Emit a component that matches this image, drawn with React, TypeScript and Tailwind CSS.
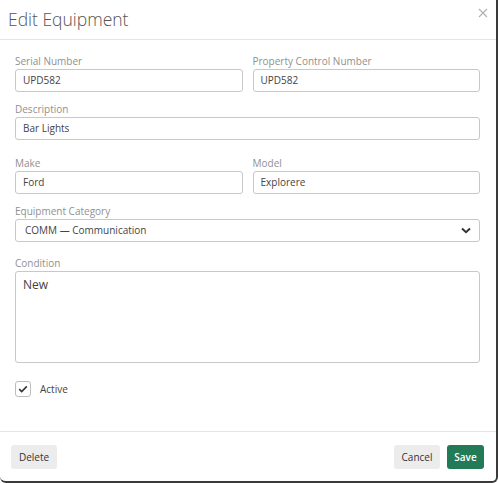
import React from "react";

const font = { fontFamily: "'Open Sans', 'Noto Sans', Arial, sans-serif" };

function Field({ label, value, className = "" }: { label: string; value: string; className?: string }) {
  return (
    <div className={`flex flex-col ${className}`}>
      <label className="h-4 text-[10px] leading-4 text-[#909090]">{label}</label>
      <div className="flex h-[23px] items-center rounded-[3px] border border-[#c8c8c8] px-[7px] text-[10px] text-[#444]">
        {value}
      </div>
    </div>
  );
}

export default function App() {
  return (
    <div className="h-[483px] w-[498px] bg-white" style={font}>
      <div className="flex h-[483px] w-[498px] flex-col rounded-b-[6px] border-r-2 border-b-2 border-[#3a3a3a] bg-white">
        <div className="relative flex h-10 shrink-0 items-center border-b border-[#e5e5e5] pl-2">
          <h1 className="text-[17.5px] font-light leading-none text-[#555]">Edit Equipment</h1>
          <button className="absolute right-[8px] top-[8px] flex h-[10px] w-[10px] items-center justify-center">
            <svg width="10" height="10" viewBox="0 0 10 10" fill="none" stroke="#b0b0b0" strokeWidth="1.1">
              <path d="M1 1L9 9M9 1L1 9" />
            </svg>
          </button>
        </div>

        <div className="flex flex-1 flex-col pl-[15px] pr-4 pt-[13px]">
          <div className="grid grid-cols-2 gap-x-[10px]">
            <Field label="Serial Number" value="UPD582" />
            <Field label="Property Control Number" value="UPD582" />
          </div>
          <Field label="Description" value="Bar Lights" className="mt-[9px]" />
          <div className="mt-[15px] grid grid-cols-2 gap-x-[10px]">
            <Field label="Make" value="Ford" />
            <Field label="Model" value="Explorere" />
          </div>
          <div className="mt-[9px] flex flex-col">
            <label className="h-4 text-[10px] leading-4 text-[#909090]">Equipment Category</label>
            <div className="flex h-[23px] items-center justify-between rounded-[3px] border border-[#c8c8c8] pl-[9px] pr-[8px] text-[10px] text-[#444]">
              <span>COMM — Communication</span>
              <svg width="10" height="7" viewBox="0 0 10 7" fill="none" stroke="#333" strokeWidth="2">
                <path d="M1 1.5L5 5.2L9 1.5" />
              </svg>
            </div>
          </div>
          <div className="mt-[13px] flex flex-col">
            <label className="h-4 text-[10px] leading-4 text-[#909090]">Condition</label>
            <div className="h-[92px] rounded-[3px] border border-[#c8c8c8] px-[7px] pt-[4px] text-[12px] text-[#444]">
              New
            </div>
          </div>
          <div className="mt-[18px] flex items-center gap-[9px]">
            <div className="flex h-4 w-4 items-center justify-center rounded-[3px] border border-[#bdbdbd]">
              <svg width="10" height="8" viewBox="0 0 10 8" fill="none" stroke="#333" strokeWidth="1.6">
                <path d="M1.2 4.2L3.7 6.6L8.8 1.4" />
              </svg>
            </div>
            <span className="text-[10px] text-[#444]">Active</span>
          </div>
        </div>

        <div className="flex shrink-0 items-center justify-between border-t border-[#e5e5e5] pb-3 pl-[11px] pr-3 pt-[13px]">
          <button className="h-6 w-[46px] rounded-[3px] bg-[#ececec] text-[10px] text-[#333]">Delete</button>
          <div className="flex gap-[7px]">
            <button className="h-6 w-[46px] rounded-[3px] bg-[#ececec] text-[10px] text-[#333]">Cancel</button>
            <button className="h-6 w-[37px] rounded-[3px] bg-[#237a56] text-[10px] font-semibold text-white">Save</button>
          </div>
        </div>
      </div>
    </div>
  );
}
